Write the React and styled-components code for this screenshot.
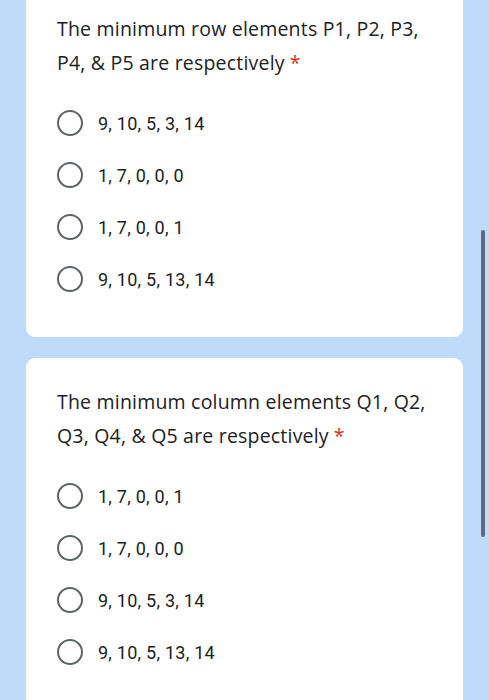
import styled, { createGlobalStyle } from "styled-components";

const GlobalStyle = createGlobalStyle`
  html, body {
    margin: 0;
    padding: 0;
    background: #bfdbfa;
    overflow: hidden;
  }
  body {
    font-family: Roboto, "Noto Sans", sans-serif;
  }
`;

const Page = styled.div`
  position: relative;
  width: 489px;
  height: 700px;
  overflow: hidden;
  background: #bfdbfa;
`;

const List = styled.div`
  display: flex;
  flex-direction: column;
  gap: 21px;
  margin-top: -15px;
  padding-left: 26px;
  width: 437px;
`;

const Card = styled.div`
  background: #ffffff;
  border-radius: 9px;
  padding: 27px 16px 32px 31px;
  display: flex;
  flex-direction: column;
`;

const Title = styled.div`
  font-family: "Open Sans", Roboto, sans-serif;
  font-size: 19.5px;
  letter-spacing: 0.2px;
  line-height: 34px;
  color: #202124;
  margin-bottom: 17px;
  white-space: nowrap;
`;

const Required = styled.span`
  color: #d93025;
  margin-left: 5px;
`;

const Option = styled.label`
  display: flex;
  align-items: center;
  gap: 15px;
  height: 52px;
  font-family: Roboto, sans-serif;
  font-size: 18px;
  letter-spacing: 0.25px;
  color: #202124;
`;

const Radio = styled.span`
  box-sizing: border-box;
  width: 26px;
  height: 26px;
  border-radius: 50%;
  border: 2.8px solid #5f6368;
  flex-shrink: 0;
`;

const Scrollbar = styled.div`
  position: absolute;
  left: 481px;
  top: 230px;
  width: 3.5px;
  height: 307px;
  border-radius: 2px;
  background: #5b6b82;
`;

const questions = [
  {
    title: "The minimum row elements P1, P2, P3,",
    title2: "P4, & P5 are respectively",
    options: ["9, 10, 5, 3, 14", "1, 7, 0, 0, 0", "1, 7, 0, 0, 1", "9, 10, 5, 13, 14"],
  },
  {
    title: "The minimum column elements Q1, Q2,",
    title2: "Q3, Q4, & Q5 are respectively",
    options: ["1, 7, 0, 0, 1", "1, 7, 0, 0, 0", "9, 10, 5, 3, 14", "9, 10, 5, 13, 14"],
  },
];

export default function App() {
  return (
    <Page>
      <GlobalStyle />
      <List>
        {questions.map((q, i) => (
          <Card key={i}>
            <Title>
              {q.title}
              <br />
              {q.title2}
              <Required>*</Required>
            </Title>
            {q.options.map((o) => (
              <Option key={o}>
                <Radio />
                {o}
              </Option>
            ))}
          </Card>
        ))}
      </List>
      <Scrollbar />
    </Page>
  );
}
